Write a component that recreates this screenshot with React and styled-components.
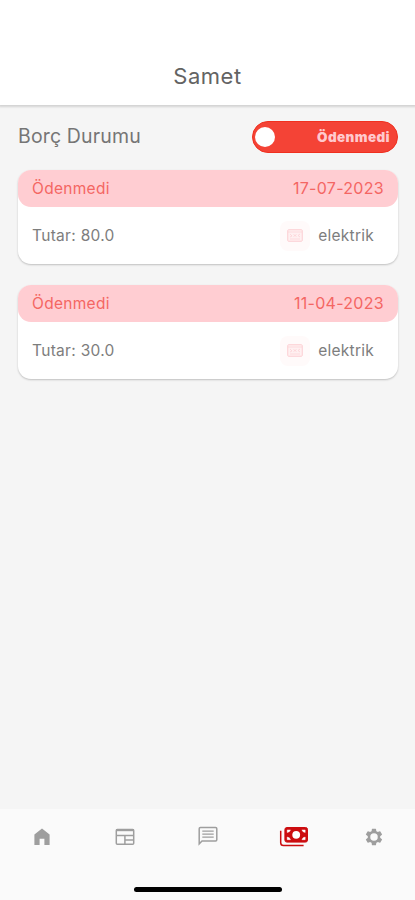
import React from 'react'
import styled, { createGlobalStyle } from 'styled-components'

const debts = [
    { id: 1, status: 'Ödenmedi', date: '17-07-2023', amount: '80.0', type: 'elektrik' },
    { id: 2, status: 'Ödenmedi', date: '11-04-2023', amount: '30.0', type: 'elektrik' },
]

function DebtCard({ debt }){
    return(
        <Card>
            <CardHeader>
                <span>{debt.status}</span>
                <DebtDate>{debt.date}</DebtDate>
            </CardHeader>
            <CardContent>
                <Amount>Tutar: {debt.amount}</Amount>
                <DebtType>
                    <IconBox>
                        <svg width="16" height="13" viewBox="0 0 16 13" fill="none" stroke="#fcced2">
                            <rect x="0.75" y="0.75" width="14.5" height="11.5" rx="0.8" fill="#fff0f1" />
                            <path d="M1 3h14M3 10h10" strokeWidth="0.6" />
                            <path d="M3 5l2 2-2 1M6.5 5.5l3 2M9.5 5.5l-3 2M13 5l-2 1.5 2 1.5" strokeWidth="0.7" />
                        </svg>
                    </IconBox>
                    <span>{debt.type}</span>
                </DebtType>
            </CardContent>
        </Card>
    );
}

function App(){
    return(
        <Page>
            <GlobalStyle />
            <Header>
                <h1>Samet</h1>
            </Header>
            <Content>
                <StatusRow>
                    <h2>Borç Durumu</h2>
                    <Switch>
                        <Knob />
                        <span>Ödenmedi</span>
                    </Switch>
                </StatusRow>
                {debts.map(debt => <DebtCard key={debt.id} debt={debt} />)}
            </Content>
            <Footer>
                <Nav>
                    <NavItem>
                        <svg width="24" height="24" viewBox="0 0 24 24" fill="currentColor">
                            <path d="M4.4 20V9.6L12 3.5l7.6 6.1V20h-5.2v-6.2H9.6V20z" />
                        </svg>
                    </NavItem>
                    <NavItem>
                        <svg width="24" height="24" viewBox="0 0 24 24" fill="none" stroke="currentColor" strokeWidth="1.5">
                            <rect x="3.3" y="4.4" width="17.4" height="14.8" rx="1" />
                            <path d="M3 5.1h18" strokeWidth="2.2" />
                            <path d="M3 10.6h18M11.9 10.7v8.5M12 14.9h9" />
                        </svg>
                    </NavItem>
                    <NavItem>
                        <svg width="24" height="24" viewBox="0 0 24 24" fill="none" stroke="currentColor" strokeWidth="1.5">
                            <path d="M3.2 18.9V3.7q0-1.2 1.2-1.2h15.2q1.2 0 1.2 1.2v11q0 1.2-1.2 1.2H6z" />
                            <path d="M6.3 6.2h11.4M6.3 9.2h11.4M6.3 12.2h11.4" strokeWidth="1.3" />
                        </svg>
                    </NavItem>
                    <NavItem $active>
                        <svg width="30" height="24" viewBox="0 0 30 24" fill="none" stroke="currentColor">
                            <path d="M1.7 5.8v12q0 2.8 2.8 2.8h20.1" strokeWidth="1.5" />
                            <rect x="5.9" y="2.5" width="22.6" height="14.6" rx="2" fill="currentColor" strokeWidth="1" />
                            <circle cx="17.2" cy="9.8" r="3.9" fill="#fff" stroke="none" />
                            <path d="M8.2 7.6V4.9h3.3q-.6 2.4-3.3 2.7zM26.2 7.6V4.9h-3.3q.6 2.4 3.3 2.7zM8.2 12v2.7h3.3q-.6-2.4-3.3-2.7zM26.2 12v2.7h-3.3q.6-2.4 3.3-2.7z" fill="#fff" stroke="#fff" strokeWidth="0.4" />
                        </svg>
                    </NavItem>
                    <NavItem>
                        <svg width="20" height="20" viewBox="0 0 24 24" fill="currentColor">
                            <path fillRule="evenodd" d="M19.4 13a7.5 7.5 0 0 0 0-2l2.1-1.6a.5.5 0 0 0 .1-.7l-2-3.4a.5.5 0 0 0-.6-.2l-2.5 1a7.3 7.3 0 0 0-1.7-1l-.4-2.7a.5.5 0 0 0-.5-.4h-4a.5.5 0 0 0-.4.4L9.1 5.1a7.7 7.7 0 0 0-1.7 1l-2.5-1a.5.5 0 0 0-.6.2l-2 3.4a.5.5 0 0 0 .2.7L4.6 11a7.5 7.5 0 0 0 0 2l-2.1 1.6a.5.5 0 0 0-.2.7l2 3.4a.5.5 0 0 0 .6.2l2.5-1a7.3 7.3 0 0 0 1.7 1l.4 2.7a.5.5 0 0 0 .4.4h4a.5.5 0 0 0 .5-.4l.4-2.7a7.7 7.7 0 0 0 1.7-1l2.5 1a.5.5 0 0 0 .6-.2l2-3.4a.5.5 0 0 0-.1-.7zM12 16.5a4.5 4.5 0 1 1 0-9 4.5 4.5 0 0 1 0 9z" />
                        </svg>
                    </NavItem>
                </Nav>
                <HomeIndicator />
            </Footer>
        </Page>
    );
}

export default App

const GlobalStyle = createGlobalStyle`
    *{
        box-sizing:border-box;
    }
    body{
        margin:0;
        font-family:Inter, 'Liberation Sans', sans-serif;
    }
    h1, h2{
        margin:0;
        font-weight:400;
    }
`;

const Page = styled.div`
    display:flex;
    flex-direction:column;
    height:900px;
    background:#f5f5f5;
`;

const Header = styled.header`
    height:105px;
    padding-top:63px;
    background:white;
    text-align:center;
    box-shadow:0 1px 2px 1px rgba(0,0,0,0.14);
    h1{
        color:#636363;
        font-size:22px;
        line-height:27px;
        letter-spacing:0.5px;
    }
`;

const Content = styled.main`
    flex:1;
    padding:16px 17px 0 18px;
`;

const StatusRow = styled.div`
    display:flex;
    justify-content:space-between;
    height:32px;
    margin-bottom:17px;
    h2{
        color:#757575;
        font-size:19.5px;
        line-height:30px;
        letter-spacing:0.15px;
    }
`;

const Switch = styled.div`
    display:flex;
    align-items:center;
    justify-content:space-between;
    width:146px;
    height:32px;
    padding:0 7px 1px 2px;
    border:1px solid #f0301f;
    border-radius:16px;
    background:#f44336;
    color:#ffc9cd;
    font-size:13.5px;
    font-weight:900;
    letter-spacing:0.4px;
`;

const Knob = styled.div`
    width:20px;
    height:20px;
    border-radius:50%;
    background:white;
`;

const Card = styled.div`
    height:94px;
    margin-bottom:21px;
    border-radius:13px;
    background:white;
    box-shadow:0 1px 2px rgba(0,0,0,0.22);
`;

const CardHeader = styled.div`
    display:flex;
    align-items:center;
    justify-content:space-between;
    height:37px;
    padding:0 14px 1px;
    border-radius:13px;
    background:#ffcdd2;
    color:#f46663;
    font-size:15.5px;
    letter-spacing:0.3px;
`;

const DebtDate = styled.span`
    font-size:16px;
    letter-spacing:0.3px;
`;

const CardContent = styled.div`
    display:flex;
    align-items:center;
    justify-content:space-between;
    height:57px;
    padding:0 24px 0 14px;
    color:#7d7d7d;
    font-size:15.5px;
`;

const Amount = styled.span`
    letter-spacing:0.3px;
`;

const DebtType = styled.div`
    display:flex;
    align-items:center;
    gap:8px;
    letter-spacing:0.25px;
`;

const IconBox = styled.div`
    display:flex;
    align-items:center;
    justify-content:center;
    width:30px;
    height:30px;
    border-radius:8px;
    background:#fffafa;
`;

const Footer = styled.footer`
    display:flex;
    flex-direction:column;
    align-items:center;
    justify-content:space-between;
    height:91px;
    padding-bottom:8px;
    background:#fafafa;
`;

const Nav = styled.nav`
    display:grid;
    grid-template-columns:repeat(5, 1fr);
    width:100%;
    height:55px;
`;

const NavItem = styled.div`
    display:flex;
    align-items:center;
    justify-content:center;
    padding-left:${props => props.$active ? '6px' : '0'};
    color:${props => props.$active ? '#cc0c0f' : '#9e9e9e'};
`;

const HomeIndicator = styled.div`
    width:148px;
    height:5px;
    border-radius:3px;
    background:black;
`;
